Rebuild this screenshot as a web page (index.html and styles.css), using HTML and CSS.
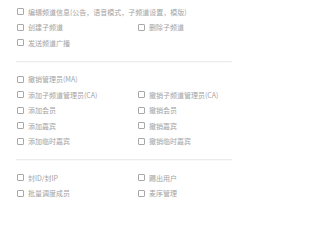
FILE: index.html
```html
<!DOCTYPE html>
<html lang="zh-CN">
<head>
<meta charset="utf-8">
<link rel="stylesheet" href="styles.css">
</head>
<body>
<div class="panel">
  <div class="group">
    <label class="item wide"><span class="box"></span><span class="txt">编辑频道信息(公告，语音模式，子频道设置，模版)</span></label>
    <label class="item"><span class="box"></span><span class="txt">创建子频道</span></label>
    <label class="item"><span class="box"></span><span class="txt">删除子频道</span></label>
    <label class="item wide"><span class="box"></span><span class="txt">发送频道广播</span></label>
  </div>
  <div class="divider"></div>
  <div class="group">
    <label class="item wide"><span class="box"></span><span class="txt">撤销管理员(MA)</span></label>
    <label class="item"><span class="box"></span><span class="txt">添加子频道管理员(CA)</span></label>
    <label class="item"><span class="box"></span><span class="txt">撤销子频道管理员(CA)</span></label>
    <label class="item"><span class="box"></span><span class="txt">添加会员</span></label>
    <label class="item"><span class="box"></span><span class="txt">撤销会员</span></label>
    <label class="item"><span class="box"></span><span class="txt">添加嘉宾</span></label>
    <label class="item"><span class="box"></span><span class="txt">撤销嘉宾</span></label>
    <label class="item"><span class="box"></span><span class="txt">添加临时嘉宾</span></label>
    <label class="item"><span class="box"></span><span class="txt">撤销临时嘉宾</span></label>
  </div>
  <div class="divider"></div>
  <div class="group">
    <label class="item"><span class="box"></span><span class="txt">封ID/封IP</span></label>
    <label class="item"><span class="box"></span><span class="txt">踢出用户</span></label>
    <label class="item"><span class="box"></span><span class="txt">批量调度成员</span></label>
    <label class="item"><span class="box"></span><span class="txt">麦序管理</span></label>
  </div>
</div>
</body>
</html>
```
FILE: styles.css
```css
html, body {
  margin: 0;
  padding: 0;
  background: #ffffff;
}
.panel {
  width: 216px;
  margin-left: 16px;
  padding-top: 4px;
  font-family: "Noto Sans CJK SC", "Noto Sans", sans-serif;
  font-size: 7px;
  color: #a3a3a3;
}
.group {
  display: grid;
  grid-template-columns: 121px 1fr;
  grid-auto-rows: 15.5px;
  padding-left: 1px;
}
.item {
  display: flex;
  align-items: center;
  gap: 4px;
  white-space: nowrap;
}
.wide {
  grid-column: 1 / -1;
}
.box {
  width: 5px;
  height: 5px;
  border: 1px solid #a8a8a8;
  border-radius: 1px;
  flex: none;
}
.divider {
  height: 1px;
  background: #ececec;
  box-shadow: 0 1px 1px rgba(0,0,0,0.03);
  margin: 10px 0;
}
```
